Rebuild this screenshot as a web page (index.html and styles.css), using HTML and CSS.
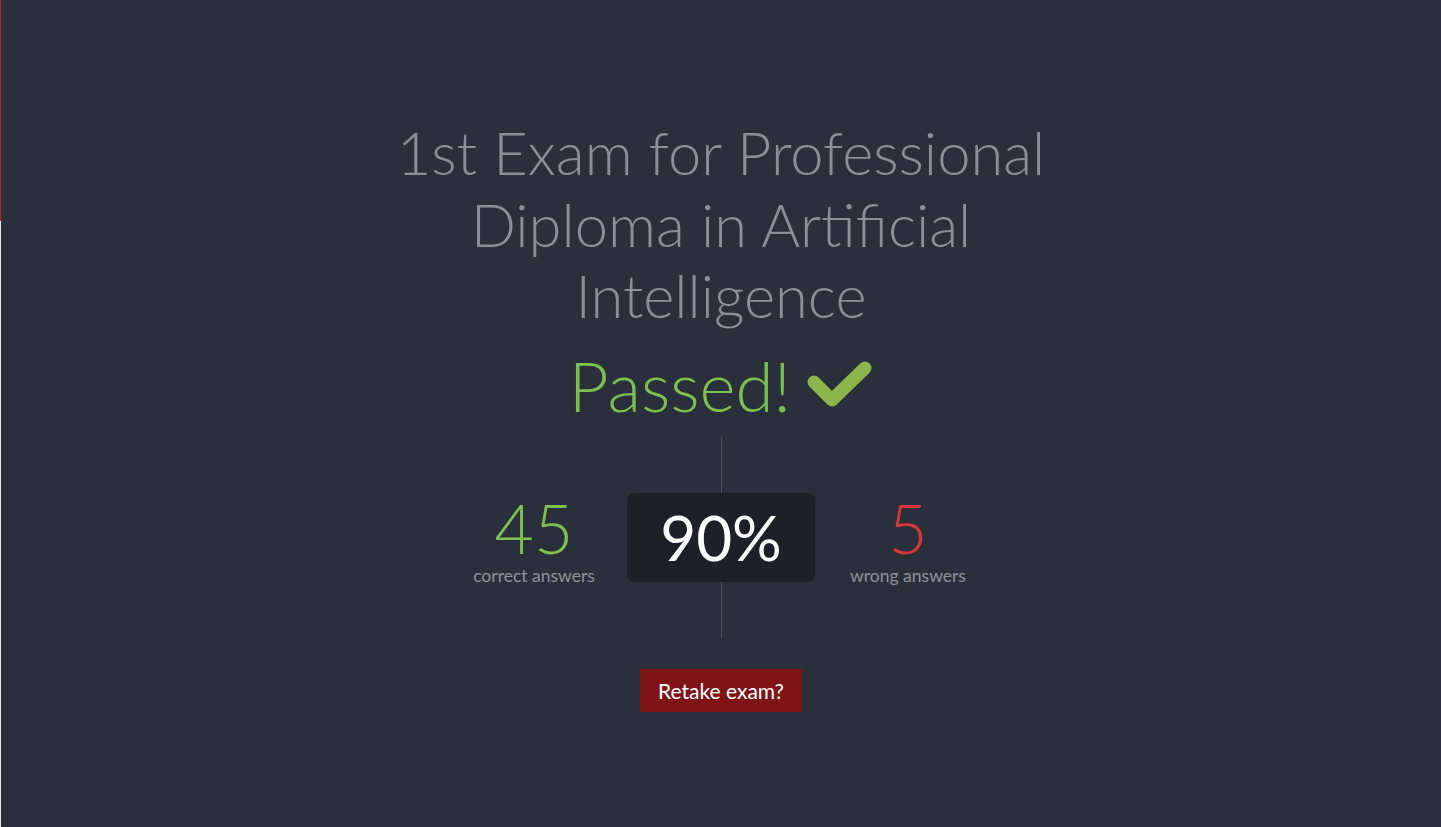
FILE: index.html
```html
<!DOCTYPE html>
<html lang="en">
<head>
<meta charset="utf-8">
<title>Exam result</title>
<link rel="stylesheet" href="styles.css">
</head>
<body>
<div class="page">
  <main class="result">
    <h1 class="title">1st Exam for Professional Diploma in Artificial Intelligence</h1>
    <div class="status">
      <span class="status-text">Passed!</span>
      <svg class="check" width="68" height="52" viewBox="0 0 68 52" aria-hidden="true">
        <polyline points="9,25 27,43 60,11" fill="none" stroke="#8ab54b" stroke-width="13" stroke-linecap="round" stroke-linejoin="round"/>
      </svg>
    </div>
    <div class="stats">
      <div class="stat">
        <div class="stat-num good">45</div>
        <div class="stat-label">correct answers</div>
      </div>
      <div class="divider">
        <div class="line"></div>
        <div class="score">90%</div>
        <div class="line"></div>
      </div>
      <div class="stat">
        <div class="stat-num bad">5</div>
        <div class="stat-label">wrong answers</div>
      </div>
    </div>
    <button class="retake">Retake exam?</button>
  </main>
</div>
</body>
</html>
```
FILE: styles.css
```css
html, body {
  margin: 0;
  padding: 0;
  height: 100%;
}
body {
  background: #2a303b;
  font-family: "Lato", "Open Sans", sans-serif;
}
.page {
  min-height: 827px;
  box-sizing: border-box;
  border-left: 1px solid #e9e9e9;
  background: #2a303b;
  position: relative;
}
.page::before {
  content: "";
  position: absolute;
  left: -1px;
  top: 0;
  width: 1px;
  height: 221px;
  background: #b0282a;
}
.result {
  display: flex;
  flex-direction: column;
  align-items: center;
  padding-top: 117px;
}
.title {
  margin: 0;
  width: 700px;
  text-align: center;
  font-weight: 300;
  font-size: 59.6px;
  line-height: 71.5px;
  color: #8b8f97;
}
.status {
  display: flex;
  align-items: center;
  gap: 16px;
  margin-top: 14px;
  height: 80px;
}
.status-text {
  font-weight: 300;
  font-size: 69px;
  line-height: 80px;
  color: #7cc150;
}
.check {
  display: block;
  margin-top: -6px;
  margin-left: -2px;
}
.stats {
  display: flex;
  align-items: center;
  gap: 28px;
  margin-top: 11px;
}
.stat {
  width: 130px;
  display: flex;
  flex-direction: column;
  align-items: center;
  margin-top: 8px;
}
.stat-num {
  font-weight: 300;
  font-size: 68px;
  line-height: 66px;
}
.stat-label {
  margin-top: 4px;
  font-size: 17.5px;
  line-height: 22px;
  color: #8f949c;
  white-space: nowrap;
}
.stat-num.good { color: #7cc150; }
.stat-num.bad { color: #d8363a; }
.divider {
  display: flex;
  flex-direction: column;
  align-items: center;
}
.line {
  width: 1px;
  height: 56px;
  background: #4b505b;
}
.score {
  width: 188px;
  height: 89px;
  background: #1d2027;
  border-radius: 7px;
  color: #ffffff;
  font-size: 62px;
  line-height: 89px;
  text-align: center;
  font-weight: 400;
}
.retake {
  margin-top: 31px;
  width: 162px;
  height: 43px;
  background: #7f1416;
  color: #ffffff;
  border: none;
  font-family: "Lato", sans-serif;
  font-size: 21px;
  padding: 0;
}
```
